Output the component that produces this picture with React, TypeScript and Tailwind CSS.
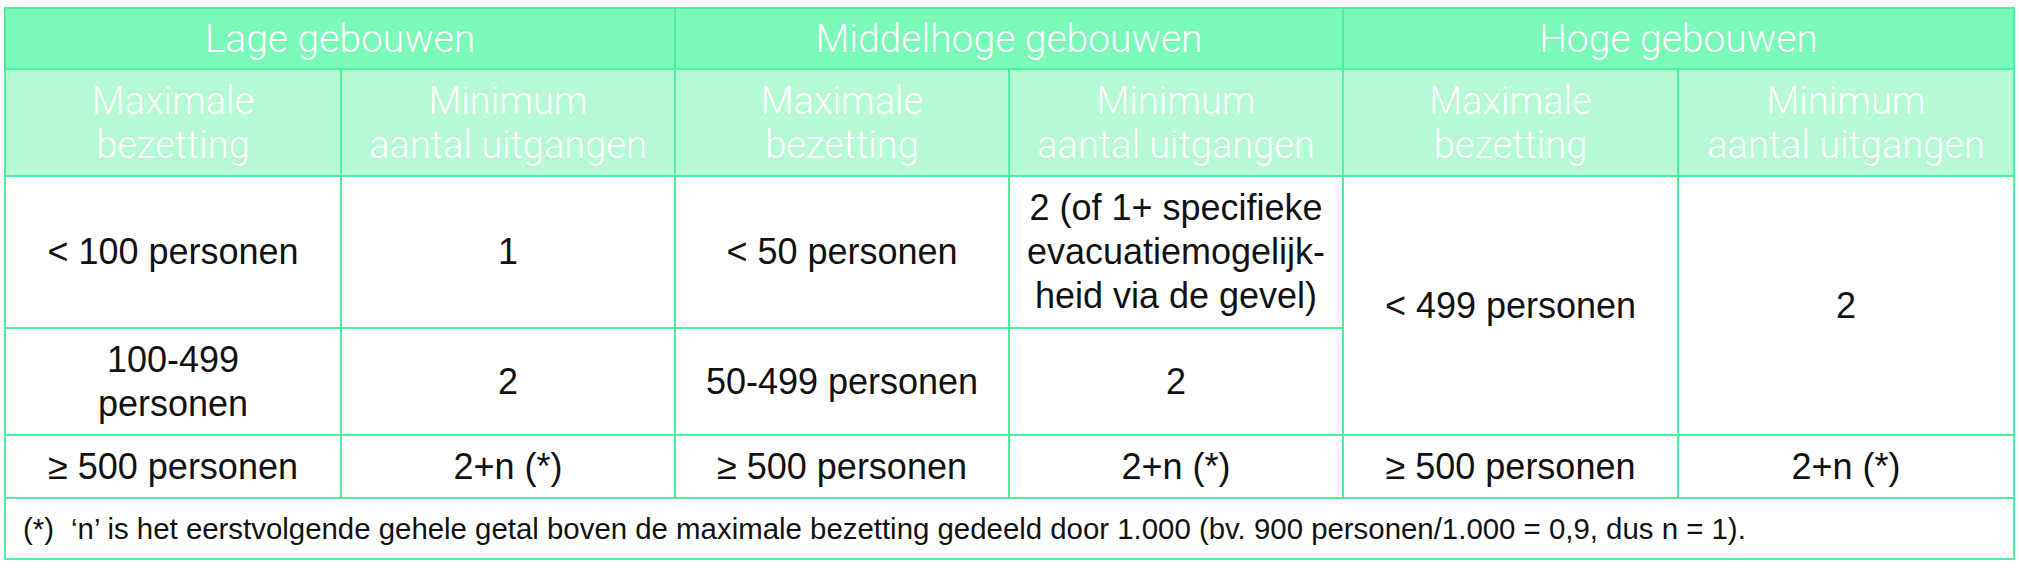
const cell = "border-2 border-[#4eef9f] text-center align-middle";
const head = "font-['Roboto','Liberation_Sans',sans-serif] font-light text-white";

function Sub() {
  return (
    <>
      <th className={`${cell} bg-[#b5f9d5] font-light`}>
        Maximale
        <br />
        bezetting
      </th>
      <th className={`${cell} bg-[#b5f9d5] font-light`}>
        Minimum
        <br />
        aantal uitgangen
      </th>
    </>
  );
}

export default function App() {
  return (
    <div className="bg-white w-[2019px] h-[570px] pt-[7px] pl-[4px]">
      <table className="border-collapse w-[2009px] table-fixed font-['Liberation_Sans',Arial,sans-serif] text-[#111] text-[36px] leading-[44px]">
        <colgroup>
          <col className="w-[336px]" />
          <col className="w-[334px]" />
          <col className="w-[334px]" />
          <col className="w-[334px]" />
          <col className="w-[335px]" />
          <col className="w-[336px]" />
        </colgroup>
        <thead className={head}>
          <tr className="h-[61px] text-[39px]">
            <th colSpan={2} className={`${cell} bg-[#7bf9b9] font-light`}>
              Lage gebouwen
            </th>
            <th colSpan={2} className={`${cell} bg-[#7bf9b9] font-light`}>
              Middelhoge gebouwen
            </th>
            <th colSpan={2} className={`${cell} bg-[#7bf9b9] font-light`}>
              Hoge gebouwen
            </th>
          </tr>
          <tr className="h-[107px] text-[38px] leading-[44px]">
            <Sub />
            <Sub />
            <Sub />
          </tr>
        </thead>
        <tbody>
          <tr className="h-[152px]">
            <td className={cell}>&lt; 100 personen</td>
            <td className={cell}>1</td>
            <td className={cell}>&lt; 50 personen</td>
            <td className={cell}>
              2 (of 1+ specifieke
              <br />
              evacuatiemogelijk-
              <br />
              heid via de gevel)
            </td>
            <td rowSpan={2} className={cell}>
              &lt; 499 personen
            </td>
            <td rowSpan={2} className={cell}>
              2
            </td>
          </tr>
          <tr className="h-[107px]">
            <td className={cell}>
              100-499
              <br />
              personen
            </td>
            <td className={cell}>2</td>
            <td className={cell}>50-499 personen</td>
            <td className={cell}>2</td>
          </tr>
          <tr className="h-[63px]">
            <td className={cell}>≥ 500 personen</td>
            <td className={cell}>2+n (*)</td>
            <td className={cell}>≥ 500 personen</td>
            <td className={cell}>2+n (*)</td>
            <td className={cell}>≥ 500 personen</td>
            <td className={cell}>2+n (*)</td>
          </tr>
          <tr className="h-[61px]">
            <td colSpan={6} className="border-2 border-[#4eef9f] text-left align-middle pl-[17px] text-[29.4px]">
              <span className="inline-block w-[48px]">(*)</span>
              ‘n’ is het eerstvolgende gehele getal boven de maximale bezetting gedeeld door 1.000 (bv. 900 personen/1.000 = 0,9, dus n = 1).
            </td>
          </tr>
        </tbody>
      </table>
    </div>
  );
}
